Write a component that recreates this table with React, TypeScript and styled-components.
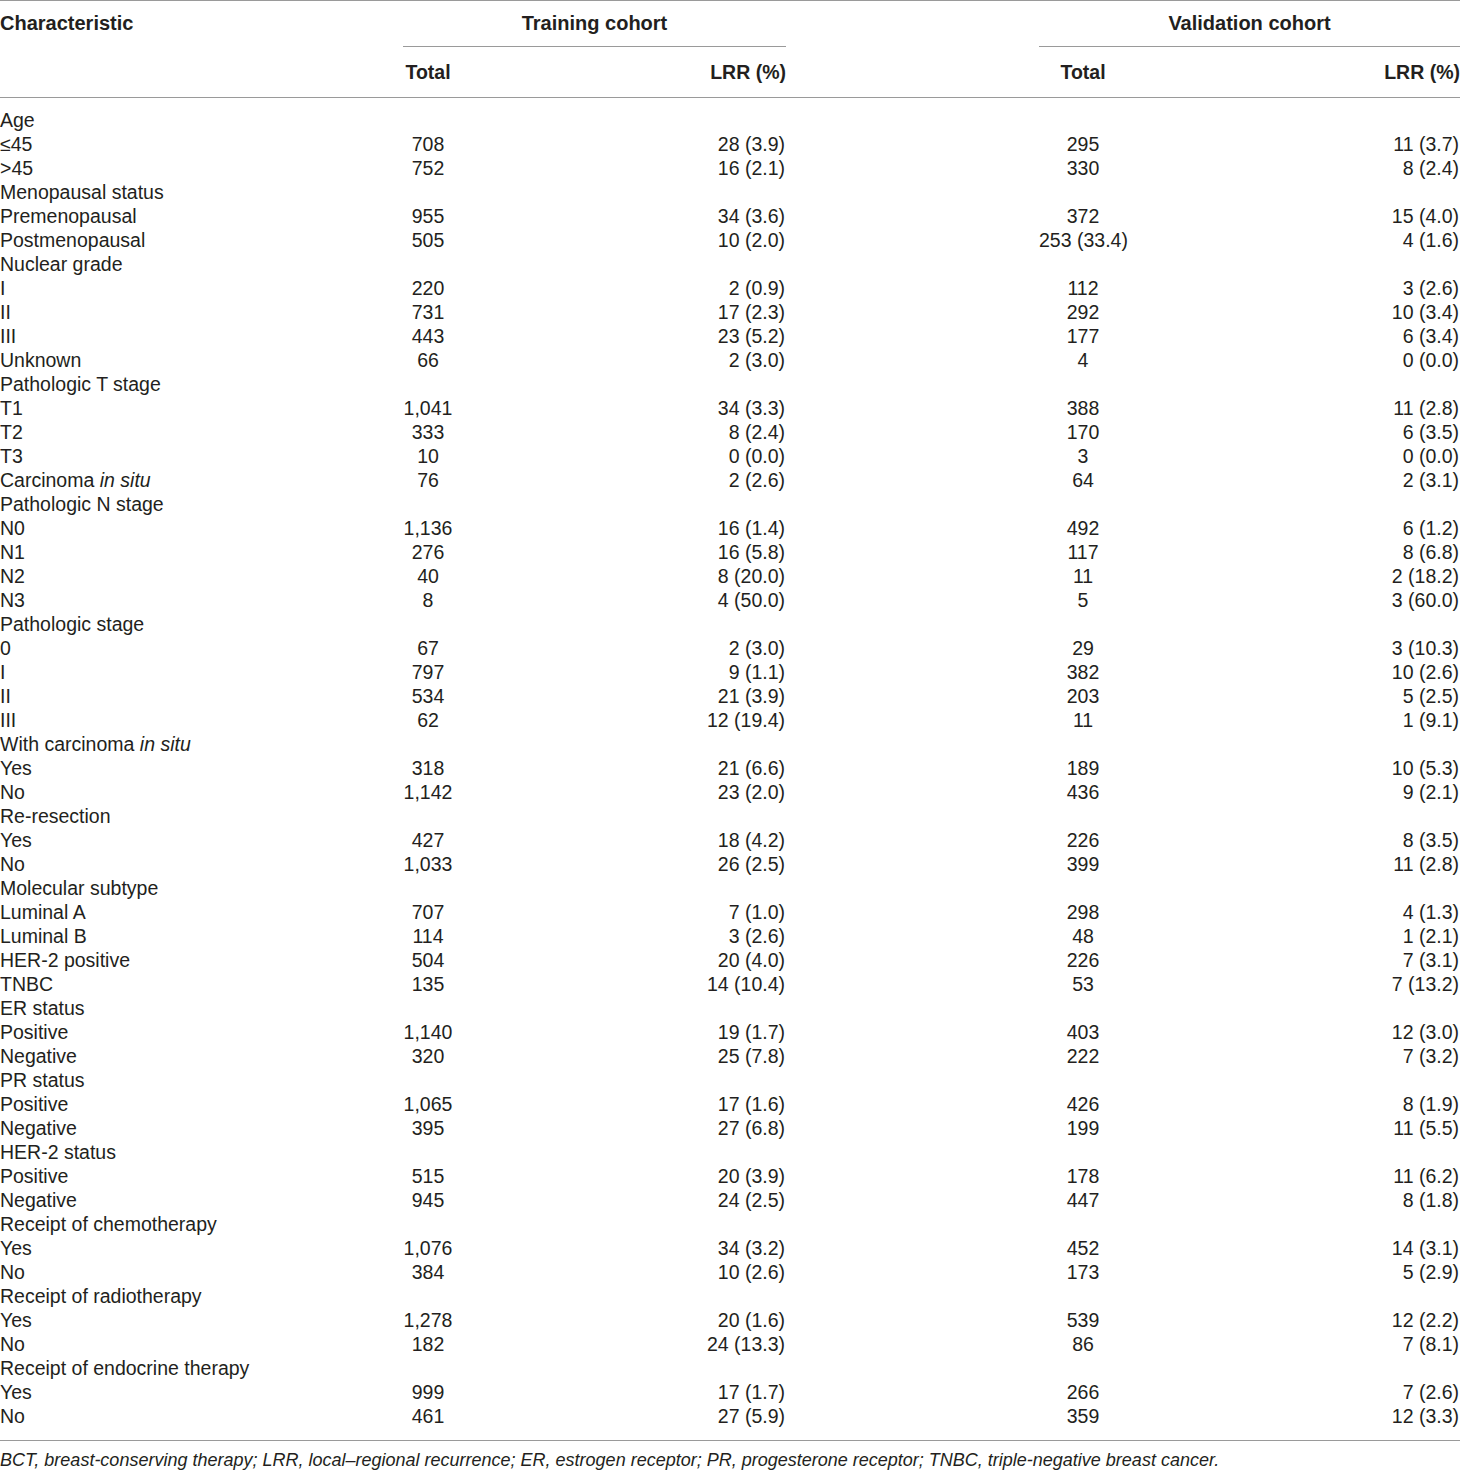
import React from "react";
import styled, { createGlobalStyle } from "styled-components";

const Global = createGlobalStyle`
  body {
    margin: 0;
    background: #fff;
    color: #231f20;
    font-family: "Liberation Sans", Arial, sans-serif;
  }
`;

const Page = styled.div`
  width: 1460px;
  border-top: 1px solid #9a9a9a;
`;

const Grid = styled.div`
  display: grid;
  grid-template-columns: 403px 50px 333px 253px 88px 333px;
  font-size: 19.5px;
  line-height: 24px;
`;

const GroupHead = styled.div<{ $col: string; $align?: string }>`
  grid-column: ${p => p.$col};
  height: 46px;
  box-sizing: border-box;
  padding-top: 10px;
  font-weight: bold;
  font-size: 20px;
  text-align: ${p => p.$align || "center"};
`;

const Underlined = styled(GroupHead)`
  border-bottom: 1px solid #9a9a9a;
`;

const SubHead = styled.div<{ $align?: string }>`
  height: 51px;
  box-sizing: border-box;
  padding-top: 13px;
  font-weight: bold;
  text-align: ${p => p.$align || "center"};
  border-bottom: 1px solid #9a9a9a;
  white-space: nowrap;
`;

const Cell = styled.div<{ $align?: string; $first?: boolean; $last?: boolean }>`
  text-align: ${p => p.$align || "left"};
  white-space: nowrap;
  padding-top: ${p => (p.$first ? "10px" : "0")};
  padding-bottom: ${p => (p.$last ? "12px" : "0")};
  padding-right: ${p => (p.$align === "right" ? "1px" : "0")};
`;

const Footer = styled.div`
  border-top: 1px solid #9a9a9a;
  padding-top: 9px;
  font-size: 18px;
  font-style: italic;
  line-height: 20px;
  white-space: nowrap;
`;

type Row = [React.ReactNode, string?, string?, string?, string?];

const situ = (pre: string) => (
  <>
    {pre}
    <i>in situ</i>
  </>
);

const rows: Row[] = [
  ["Age"],
  ["≤45", "708", "28 (3.9)", "295", "11 (3.7)"],
  [">45", "752", "16 (2.1)", "330", "8 (2.4)"],
  ["Menopausal status"],
  ["Premenopausal", "955", "34 (3.6)", "372", "15 (4.0)"],
  ["Postmenopausal", "505", "10 (2.0)", "253 (33.4)", "4 (1.6)"],
  ["Nuclear grade"],
  ["I", "220", "2 (0.9)", "112", "3 (2.6)"],
  ["II", "731", "17 (2.3)", "292", "10 (3.4)"],
  ["III", "443", "23 (5.2)", "177", "6 (3.4)"],
  ["Unknown", "66", "2 (3.0)", "4", "0 (0.0)"],
  ["Pathologic T stage"],
  ["T1", "1,041", "34 (3.3)", "388", "11 (2.8)"],
  ["T2", "333", "8 (2.4)", "170", "6 (3.5)"],
  ["T3", "10", "0 (0.0)", "3", "0 (0.0)"],
  [situ("Carcinoma "), "76", "2 (2.6)", "64", "2 (3.1)"],
  ["Pathologic N stage"],
  ["N0", "1,136", "16 (1.4)", "492", "6 (1.2)"],
  ["N1", "276", "16 (5.8)", "117", "8 (6.8)"],
  ["N2", "40", "8 (20.0)", "11", "2 (18.2)"],
  ["N3", "8", "4 (50.0)", "5", "3 (60.0)"],
  ["Pathologic stage"],
  ["0", "67", "2 (3.0)", "29", "3 (10.3)"],
  ["I", "797", "9 (1.1)", "382", "10 (2.6)"],
  ["II", "534", "21 (3.9)", "203", "5 (2.5)"],
  ["III", "62", "12 (19.4)", "11", "1 (9.1)"],
  [situ("With carcinoma ")],
  ["Yes", "318", "21 (6.6)", "189", "10 (5.3)"],
  ["No", "1,142", "23 (2.0)", "436", "9 (2.1)"],
  ["Re-resection"],
  ["Yes", "427", "18 (4.2)", "226", "8 (3.5)"],
  ["No", "1,033", "26 (2.5)", "399", "11 (2.8)"],
  ["Molecular subtype"],
  ["Luminal A", "707", "7 (1.0)", "298", "4 (1.3)"],
  ["Luminal B", "114", "3 (2.6)", "48", "1 (2.1)"],
  ["HER-2 positive", "504", "20 (4.0)", "226", "7 (3.1)"],
  ["TNBC", "135", "14 (10.4)", "53", "7 (13.2)"],
  ["ER status"],
  ["Positive", "1,140", "19 (1.7)", "403", "12 (3.0)"],
  ["Negative", "320", "25 (7.8)", "222", "7 (3.2)"],
  ["PR status"],
  ["Positive", "1,065", "17 (1.6)", "426", "8 (1.9)"],
  ["Negative", "395", "27 (6.8)", "199", "11 (5.5)"],
  ["HER-2 status"],
  ["Positive", "515", "20 (3.9)", "178", "11 (6.2)"],
  ["Negative", "945", "24 (2.5)", "447", "8 (1.8)"],
  ["Receipt of chemotherapy"],
  ["Yes", "1,076", "34 (3.2)", "452", "14 (3.1)"],
  ["No", "384", "10 (2.6)", "173", "5 (2.9)"],
  ["Receipt of radiotherapy"],
  ["Yes", "1,278", "20 (1.6)", "539", "12 (2.2)"],
  ["No", "182", "24 (13.3)", "86", "7 (8.1)"],
  ["Receipt of endocrine therapy"],
  ["Yes", "999", "17 (1.7)", "266", "7 (2.6)"],
  ["No", "461", "27 (5.9)", "359", "12 (3.3)"],
];

export default function App() {
  return (
    <Page>
      <Global />
      <Grid>
        <GroupHead $col="1 / 2" $align="left">Characteristic</GroupHead>
        <Underlined $col="2 / 4">Training cohort</Underlined>
        <GroupHead $col="4 / 5" />
        <Underlined $col="5 / 7">Validation cohort</Underlined>

        <SubHead />
        <SubHead>Total</SubHead>
        <SubHead $align="right">LRR (%)</SubHead>
        <SubHead />
        <SubHead>Total</SubHead>
        <SubHead $align="right">LRR (%)</SubHead>

        {rows.map((r, i) => {
          const first = i === 0;
          const last = i === rows.length - 1;
          return (
            <React.Fragment key={i}>
              <Cell $first={first} $last={last}>{r[0]}</Cell>
              <Cell $first={first} $last={last} $align="center">{r[1]}</Cell>
              <Cell $first={first} $last={last} $align="right">{r[2]}</Cell>
              <Cell $first={first} $last={last} />
              <Cell $first={first} $last={last} $align="center">{r[3]}</Cell>
              <Cell $first={first} $last={last} $align="right">{r[4]}</Cell>
            </React.Fragment>
          );
        })}
      </Grid>
      <Footer>
        BCT, breast-conserving therapy; LRR, local–regional recurrence; ER, estrogen receptor; PR,
        progesterone receptor; TNBC, triple-negative breast cancer.
      </Footer>
    </Page>
  );
}
